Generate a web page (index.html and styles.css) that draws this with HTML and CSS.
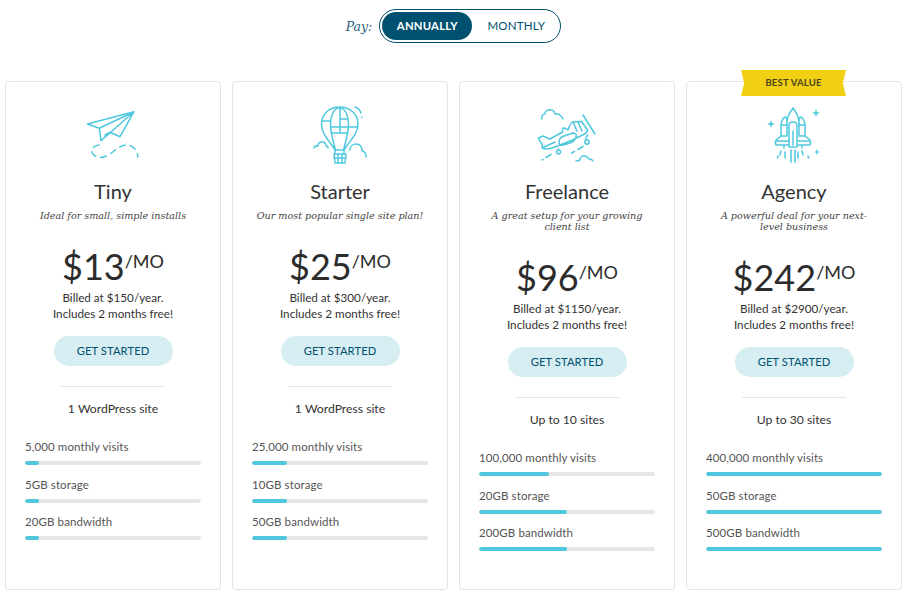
FILE: index.html
```html
<!DOCTYPE html>
<html lang="en">
<head>
<meta charset="utf-8">
<title>Pricing</title>
<link rel="stylesheet" href="styles.css">
</head>
<body>
<div class="pay">
  <span class="pay-label">Pay:</span>
  <div class="toggle"><span class="opt active">ANNUALLY</span><span class="opt">MONTHLY</span></div>
</div>
<main class="plans">
  <section class="card">
    <svg class="icon" viewBox="83 105 60 60"><path d="M134 111.700 87.500 124 99.300 128.300 101 140.700 110 132.300 120 136.700ZM134 111.700 99.300 128.300M134 111.700 101 140.700M105 135l5-2.700"/><path class="dash" d="M99 145c-6 1-9 5-6 9 3 4 9 5 15 1 6-3 10-9 18-10 6 0 11 4 12 12"/></svg>
    <h2>Tiny</h2>
    <p class="tag">Ideal for small, simple installs</p>
    <div class="price">$13<span class="per">/MO</span></div>
    <p class="bill">Billed at $150/year.<br>Includes 2 months free!</p>
    <a class="btn">GET STARTED</a>
    <hr class="rule">
    <p class="sites">1 WordPress site</p>
    <div class="meter"><span>5,000 monthly visits</span><div class="bar"><i style="width:8%"></i></div></div>
    <div class="meter"><span>5GB storage</span><div class="bar"><i style="width:8%"></i></div></div>
    <div class="meter"><span>20GB bandwidth</span><div class="bar"><i style="width:8%"></i></div></div>
  </section>
  <section class="card">
    <svg class="icon" viewBox="310 105 60 60"><path d="M339.500 107c-10 0-18 7-18 17 0 10 8 17 13.500 26h9c5.500-9 14-16 14-26 0-10-8-17-18.500-17ZM339.500 107c-6 2-9 9-9 17 0 10 3 18 5 26M339.500 107c6 2 9 9 9 17 0 10-3 18-5 26M321.500 121h9M330.500 127h18M340 119h8M349 127h8M332 133h7M340 133h7M340 107v26M335 150v4M344 150v4M334 154h12l-1 9h-10ZM334 158h12M338 154v9M342 154v9"/><path d="M314 148c1-3 3-2 4-2 0-3 2-4 4-4 3 0 4 2 4 4 1 0 2 1 2 2M350 150c0-4 3-6 6-6 4 0 6 3 6 7 2 0 4 2 4 6M355 107c3 1 5 3 6 6M362 117v.5"/></svg>
    <h2>Starter</h2>
    <p class="tag">Our most popular single site plan!</p>
    <div class="price">$25<span class="per">/MO</span></div>
    <p class="bill">Billed at $300/year.<br>Includes 2 months free!</p>
    <a class="btn">GET STARTED</a>
    <hr class="rule">
    <p class="sites">1 WordPress site</p>
    <div class="meter"><span>25,000 monthly visits</span><div class="bar"><i style="width:20%"></i></div></div>
    <div class="meter"><span>10GB storage</span><div class="bar"><i style="width:20%"></i></div></div>
    <div class="meter"><span>50GB bandwidth</span><div class="bar"><i style="width:20%"></i></div></div>
  </section>
  <section class="card">
    <svg class="icon" viewBox="537 105 60 60"><path d="M542 119c-1-3 1-5 3-5 0-3 3-5 6-4 2 0 4 2 4 4 3-1 6 1 8 5"/><path d="M538.500 138l4.500-2 7 3 12.500-7c0-2 0-3 .5-4 2 0 4 1 5 2 1-3 3-7 4.500-8l9-.5 6 8.500c0 2-1 3-3 4l-12 6-15 6c-5 2-9 3-12 3-3 0-4-2-3-4-1-2-3-4-4-7ZM542 148l13-6M559 142c0-3 2-5 5-6l9-3c3 0 4 2 3 4-1 3-3 5-6 6l-7 2c-3 1-4-1-4-3ZM583 115l12 19M573 122l4 9M578 122l4 9M587.500 135l-2 4M558 149v1"/><circle cx="558.500" cy="152" r="2"/><circle cx="587" cy="142" r="2.200"/><path d="M542 160l1-.5M546 157.500l5-3M571.500 153l3-1.500M578 149.500l5-3M576 161c2 0 3-.5 4-1 0-3 3-5 5-4 2 0 3 2 4 3 2 0 3 0 4 2"/></svg>
    <h2>Freelance</h2>
    <p class="tag">A great setup for your growing<br>client list</p>
    <div class="price">$96<span class="per">/MO</span></div>
    <p class="bill">Billed at $1150/year.<br>Includes 2 months free!</p>
    <a class="btn">GET STARTED</a>
    <hr class="rule">
    <p class="sites">Up to 10 sites</p>
    <div class="meter"><span>100,000 monthly visits</span><div class="bar"><i style="width:40%"></i></div></div>
    <div class="meter"><span>20GB storage</span><div class="bar"><i style="width:50%"></i></div></div>
    <div class="meter"><span>200GB bandwidth</span><div class="bar"><i style="width:50%"></i></div></div>
  </section>
  <section class="card">
    <div class="ribbon">BEST VALUE</div>
    <svg class="icon" viewBox="764 105 60 60"><path d="M787 135v-13c0-5 3-10 6-14 3 4 6 9 6 14v13M789 147v-22c0-4 8-4 8 0v22ZM793 131v14M787 122c0-3-1-5-2-5-2 1-4 5-4 8v11h6M799 122c0-3 1-5 2-5 2 1 4 5 4 8v11h-6M781 125h6M799 125h6M781 136l-5 4c-1 2-1 3 0 5h13M805 136l5 4c1 2 1 3 0 5h-13M776 141h13M797 141h13M784 146v2M802 146v2"/><path d="M781 151l-1 4M785 152v6M791 150v12M795 150v12M798 152v6M802 151l1 4M778 156l-.5 2M808 156l.5 2"/><path class="star" d="M771 120l1 3 3 1-3 1-1 3-1-3-3-1 3-1ZM816 109l1 3 3 1-3 1-1 3-1-3-3-1 3-1ZM817 149l.8 2.200 1.700.8-1.700.8-.8 2.200-.8-2.200-1.700-.8 1.700-.8Z"/></svg>
    <h2>Agency</h2>
    <p class="tag">A powerful deal for your next-<br>level business</p>
    <div class="price">$242<span class="per">/MO</span></div>
    <p class="bill">Billed at $2900/year.<br>Includes 2 months free!</p>
    <a class="btn">GET STARTED</a>
    <hr class="rule">
    <p class="sites">Up to 30 sites</p>
    <div class="meter"><span>400,000 monthly visits</span><div class="bar"><i style="width:100%"></i></div></div>
    <div class="meter"><span>50GB storage</span><div class="bar"><i style="width:100%"></i></div></div>
    <div class="meter"><span>500GB bandwidth</span><div class="bar"><i style="width:100%"></i></div></div>
  </section>
</main>
</body>
</html>
```

FILE: styles.css
```css
* { box-sizing: border-box; }
html, body { margin: 0; height: 100%; }
body {
  width: 907px;
  height: 593px;
  overflow: hidden;
  background: #fff;
  color: #333;
  font-family: "Lato", "Open Sans", sans-serif;
  padding-top: 9px;
}
.pay {
  display: flex;
  align-items: center;
  justify-content: center;
  gap: 7px;
  height: 34px;
}
.pay-label {
  font-family: "DejaVu Serif", serif;
  font-style: italic;
  font-size: 12.500px;
  color: #2d5f78;
}
.toggle {
  display: flex;
  align-items: center;
  width: 182px;
  height: 34px;
  padding: 2px;
  border: 1px solid #00506f;
  border-radius: 17px;
}
.opt {
  display: block;
  width: 90px;
  height: 28px;
  line-height: 28px;
  text-align: center;
  font-size: 11.500px;
  letter-spacing: .2px;
  color: #00506f;
  border-radius: 14px;
}
.opt.active {
  background: #00506f;
  color: #fff;
  font-size: 11.300px;
  font-weight: 700;
}
.opt + .opt { flex: 1; padding-left: 2px; }
.plans {
  display: flex;
  gap: 11px;
  margin-top: 38px;
  padding-left: 5px;
}
.card {
  position: relative;
  flex: none;
  display: flex;
  flex-direction: column;
  align-items: center;
  width: 216px;
  height: 509px;
  padding: 23px 19px 0;
  border: 1px solid #e4e4e4;
  border-radius: 4px;
}
.icon {
  display: block;
  width: 60px;
  height: 60px;
  fill: none;
  stroke: #4fc8de;
  stroke-width: 1.500;
  stroke-linecap: round;
  stroke-linejoin: round;
}
.dash { stroke-dasharray: 6 5; }
.star { fill: #4fc8de; stroke: none; }
.ribbon {
  position: absolute;
  top: -12px;
  left: 54px;
  width: 105px;
  height: 26px;
  line-height: 26px;
  text-align: center;
  font-size: 9.500px;
  font-weight: 700;
  letter-spacing: .2px;
  color: #4a4420;
  background: #f1cf13;
  clip-path: polygon(0 0, 100% 0, 97% 50%, 100% 100%, 0 100%, 3% 50%);
}
h2 {
  margin: 13px 0 0;
  height: 26px;
  line-height: 26px;
  font-weight: 400;
  font-size: 20px;
  color: #333;
}
.tag {
  margin: 6px 0 0;
  line-height: 11px;
  text-align: center;
  font-family: "DejaVu Serif", serif;
  font-style: italic;
  font-size: 9.600px;
  color: #444;
}
.price {
  margin-top: 23px;
  height: 45px;
  line-height: 45px;
  font-size: 36px;
  color: #2c2c2c;
  white-space: nowrap;
}
.per {
  position: relative;
  top: -12px;
  font-size: 18px;
}
.bill {
  margin: 0;
  line-height: 16px;
  text-align: center;
  font-size: 11.700px;
  color: #333;
}
.btn {
  display: block;
  flex: none;
  width: 119px;
  height: 30px;
  margin-top: 15px;
  line-height: 30px;
  text-align: center;
  font-size: 11.200px;
  letter-spacing: .1px;
  color: #00506f;
  background: #d6edf2;
  border-radius: 15px;
}
.rule {
  flex: none;
  width: 104px;
  height: 1px;
  margin: 20px 0 0;
  border: 0;
  background: #e4e4e4;
}
.sites {
  margin: 14px 0 0;
  height: 16px;
  line-height: 16px;
  font-size: 12.200px;
  color: #333;
}
.meter {
  width: 100%;
  font-size: 11.500px;
  color: #555;
  margin-top: 11.500px;
}
.sites + .meter { margin-top: 22px; }
.meter span {
  display: block;
  height: 16px;
  line-height: 16px;
  letter-spacing: .1px;
}
.bar {
  height: 4px;
  margin-top: 6px;
  background: #e6e6e6;
  border-radius: 2px;
  overflow: hidden;
}
.bar i {
  display: block;
  height: 100%;
  background: #4fc8de;
  border-radius: 2px;
}
```
